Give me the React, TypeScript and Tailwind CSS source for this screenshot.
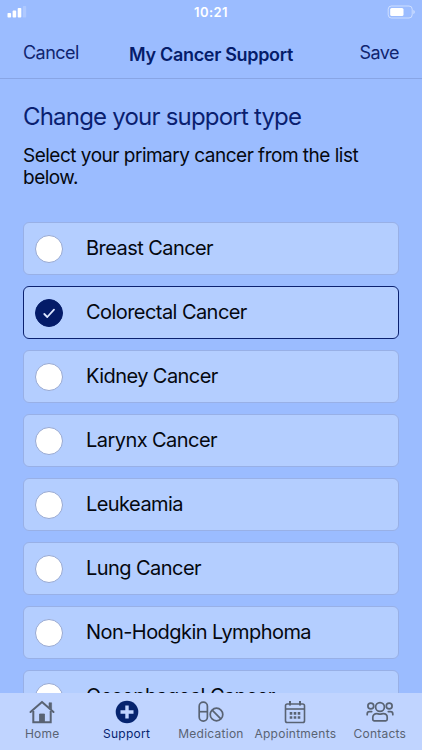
import React from "react";
import { clsx } from "clsx";

const cancerTypes = [
  "Breast Cancer",
  "Colorectal Cancer",
  "Kidney Cancer",
  "Larynx Cancer",
  "Leukeamia",
  "Lung Cancer",
  "Non-Hodgkin Lymphoma",
  "Oesophageal Cancer",
];

const StatusBar = () => (
  <div className="grid h-6 shrink-0 grid-cols-3 items-center pr-[7px] pl-[7px] text-white">
    <svg width="20" height="12" viewBox="0 0 20 12" fill="currentColor">
      <rect x="0.5" y="7" width="3.6" height="4.5" rx="0.8" />
      <rect x="5.6" y="4.6" width="3.6" height="6.9" rx="0.8" />
      <rect x="10.7" y="2" width="3.6" height="9.5" rx="0.8" />
      <rect x="15.8" y="0" width="3.4" height="11.5" rx="0.8" opacity="0.2" />
    </svg>
    <span className="pt-px text-center text-[13px] font-semibold tracking-[0.45px]">10:21</span>
    <svg className="justify-self-end" width="28" height="14" viewBox="0 0 28 14">
      <rect x="1.2" y="1" width="24" height="12" rx="3.2" fill="none" stroke="currentColor" opacity="0.5" />
      <rect x="3.2" y="2.9" width="13.3" height="8.2" rx="1.5" fill="currentColor" />
      <path d="M26.300 5v4c1-.3 1.500-1 1.500-2s-.5-1.700-1.500-2Z" fill="currentColor" opacity="0.5" />
    </svg>
  </div>
);

const HomeIcon = () => (
  <svg width="26" height="24" viewBox="0 0 26 24" fill="none" stroke="currentColor" strokeWidth="2">
    <path d="M1.500 12 13 1.900 24.500 12" strokeLinecap="round" strokeLinejoin="round" />
    <path d="M4.300 11v11.200h17.400V11" />
    <path d="M20 2.800h2.600v6.500L20 7Z" fill="currentColor" strokeWidth="0.600" />
    <path d="M10.500 22v-8h5v8Z" fill="currentColor" strokeWidth="0.800" />
  </svg>
);

const SupportIcon = () => (
  <svg width="24" height="24" viewBox="0 0 24 24">
    <circle cx="12" cy="12" r="11.300" fill="currentColor" />
    <path d="M12 5.500v13M5.500 12h13" stroke="#c0d4ff" strokeWidth="3.400" />
  </svg>
);

const MedicationIcon = () => (
  <svg width="26" height="22" viewBox="0 0 26 22" fill="none" stroke="currentColor" strokeWidth="1.700">
    <rect x="1.200" y="1.200" width="8.200" height="19" rx="4.100" />
    <path d="M1.200 10.700h8.200" />
    <circle cx="18.500" cy="13.500" r="6.300" />
    <path d="m14.200 9.200 8.600 8.600" />
  </svg>
);

const CalendarIcon = () => (
  <svg width="22" height="24" viewBox="0 0 22 24" fill="none" stroke="currentColor" strokeWidth="1.600">
    <rect x="1.500" y="4" width="19" height="18.500" rx="1.800" />
    <path d="M1.500 9h19" />
    <path d="M6 1v4.500M16 1v4.500" strokeWidth="2" />
    <path d="M5.700 13.400h2.600M9.700 13.400h2.600M13.700 13.400h2.600M5.700 17.500h2.600M9.700 17.500h2.600M13.700 17.500h2.600" strokeWidth="2.600" />
  </svg>
);

const ContactsIcon = () => (
  <svg width="28" height="22" viewBox="0 0 28 22" fill="none" stroke="currentColor" strokeWidth="1.700" strokeLinecap="round">
    <circle cx="14" cy="6" r="4.400" />
    <circle cx="4.800" cy="5" r="2.900" />
    <circle cx="23.200" cy="5" r="2.900" />
    <path d="M6.800 18.300v-2c0-2.300 1.700-3.700 4-3.700 1.100 0 1.800.5 3.200.5s2.100-.5 3.200-.5c2.300 0 4 1.400 4 3.700v2c0 .900-.6 1.500-1.500 1.500H8.300c-.900 0-1.500-.6-1.500-1.500Z" strokeLinejoin="round" />
    <path d="M1.200 13.700v-.8c0-1.500.9-2.300 2.300-2.300h2.200M26.800 13.700v-.8c0-1.500-.9-2.300-2.300-2.300h-2.200" />
  </svg>
);

const tabs = [
  { label: "Home", icon: <HomeIcon />, spacing: "tracking-[0.25px]" },
  { label: "Support", icon: <SupportIcon />, spacing: "tracking-[0.25px]" },
  { label: "Medication", icon: <MedicationIcon />, spacing: "tracking-[0.25px]" },
  { label: "Appointments", icon: <CalendarIcon />, spacing: "tracking-[0.25px]" },
  { label: "Contacts", icon: <ContactsIcon />, spacing: "tracking-[0.2px]" },
];

interface OptionRowProps {
  label: string;
  selected: boolean;
}

const OptionRow: React.FC<OptionRowProps> = ({ label, selected }) => (
  <button
    className={clsx(
      "flex h-[53px] shrink-0 items-center rounded-[6px] border bg-[#b4ceff] pl-[11px] text-left",
      selected ? "border-[#0c2270]" : "border-[#98b0e6]"
    )}
  >
    <span
      className={clsx(
        "flex size-[28px] items-center justify-center rounded-full border",
        selected ? "border-[#041b68] bg-[#041b68]" : "border-[#98a9d2] bg-white"
      )}
    >
      {selected && (
        <svg width="14" height="12" viewBox="0 0 14 12" fill="none" stroke="#dce6ff" strokeWidth="1.800" strokeLinecap="round" strokeLinejoin="round">
          <path d="m2.300 7 3 3L12 2.700" />
        </svg>
      )}
    </span>
    <span className="ml-[23px] pb-[2px] text-[20px] leading-6 tracking-[-0.56px] text-[#05080f]">{label}</span>
  </button>
);

export default function App() {
  const selected = "Colorectal Cancer";
  const activeTab = "Support";

  return (
    <div className="flex h-[750px] w-[422px] flex-col overflow-hidden bg-[#9bbcff] font-['Inter',sans-serif]">
      <StatusBar />

      <header className="grid h-[55px] shrink-0 grid-cols-[80px_1fr_80px] border-b border-[#88a5e5] px-[23px] text-[18px] leading-6 text-[#10256f]">
        <button className="mt-[17px] self-start text-left tracking-[-0.55px]">Cancel</button>
        <h1 className="mt-[19px] text-center font-semibold tracking-[-0.32px] whitespace-nowrap text-[#051c6a]">
          My Cancer Support
        </h1>
        <button className="mt-[17px] self-start text-right tracking-[-0.55px]">Save</button>
      </header>

      <main className="flex min-h-0 flex-1 flex-col overflow-hidden px-[23px]">
        <h2 className="mt-[22px] text-[24px] leading-8 tracking-[-0.8px] whitespace-nowrap text-[#0a1f70]">
          Change your support type
        </h2>
        <p className="mt-[12px] text-[19px] leading-[22px] tracking-[-0.5px] text-[#05080f]">
          Select your primary cancer from the list
          <br />
          below.
        </p>
        <div className="mt-[33px] flex flex-col gap-[11px]">
          {cancerTypes.map((type) => (
            <OptionRow key={type} label={type} selected={type === selected} />
          ))}
        </div>
      </main>

      <nav className="grid h-[57px] shrink-0 grid-cols-5 bg-[#c0d4ff]">
        {tabs.map(({ label, icon, spacing }) => (
          <button
            key={label}
            className={clsx(
              "flex flex-col items-center pt-[5px]",
              label === activeTab ? "text-[#06246f]" : "text-[#596373]"
            )}
          >
            <span className="flex h-[28px] items-center">{icon}</span>
            <span className={clsx("text-[12px] leading-4 whitespace-nowrap", spacing)}>{label}</span>
          </button>
        ))}
      </nav>
    </div>
  );
}
